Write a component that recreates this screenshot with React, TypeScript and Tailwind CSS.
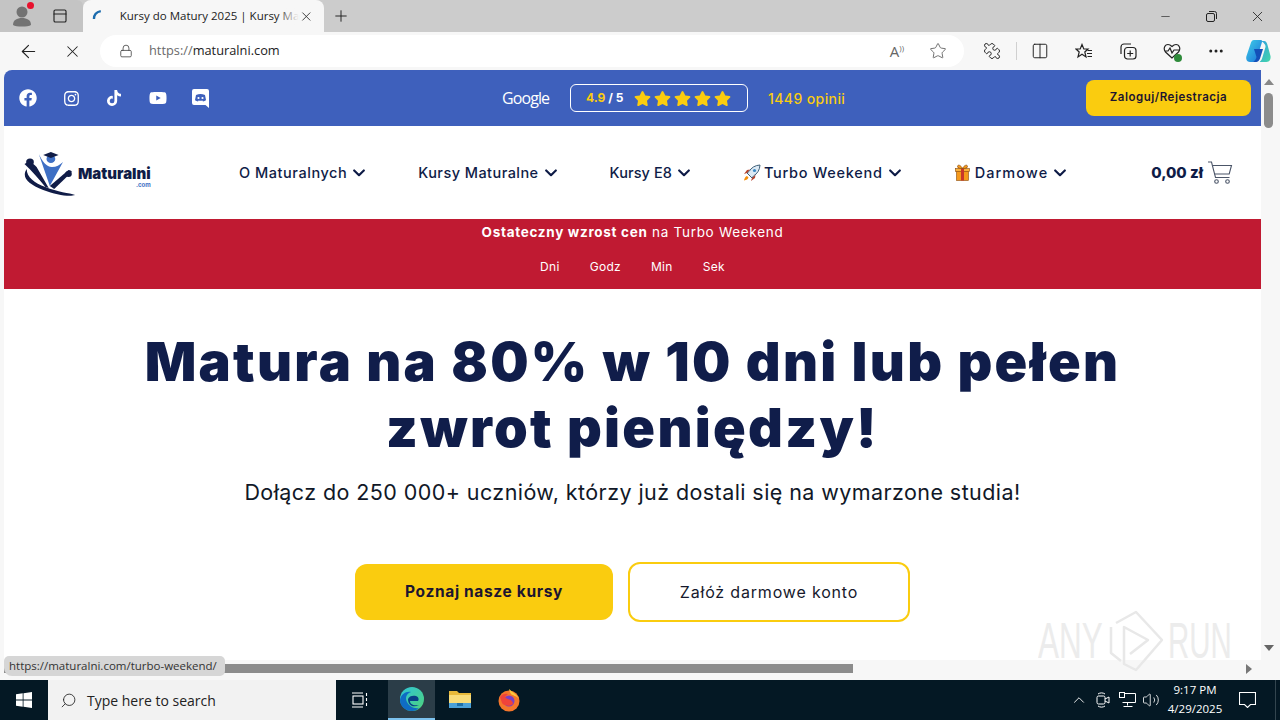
import React from "react";
import { FaFacebook, FaInstagram, FaTiktok, FaYoutube, FaStar } from "react-icons/fa";
import { ArrowLeft, X, Plus, Lock, Star, Minus, Puzzle, Columns2, MoreHorizontal, ChevronUp, Search, Volume2, PanelTop } from "lucide-react";

const MF = "font-['Inter','Liberation_Sans',sans-serif]";

function Chevron() {
  return (
    <svg width="12" height="8" viewBox="0 0 12 8" className="ml-[6px]" fill="none" stroke="#0f1c47" strokeWidth="2.2" strokeLinecap="round" strokeLinejoin="round">
      <path d="M1.2 1.5 6 6.2l4.8-4.7" />
    </svg>
  );
}

function Rocket() {
  return (
    <svg width="18" height="18" viewBox="0 0 18 18" className="mr-[3px]">
      <path d="M17 1c-5 .3-8.500 2.500-11 6.500L4 9l5 5 1.500-2C14.500 9.500 16.700 6 17 1z" fill="#dbe9f4" stroke="#3f5f78" strokeWidth="1" />
      <circle cx="11.500" cy="6.500" r="1.600" fill="#3b88c3" />
      <path d="M4 9 1 10l3-4 3-.5zM9 14l-1 3 4-3 .5-3z" fill="#b5432e" />
      <path d="M4 12c-1.500.5-2.500 1.800-3 4.500 2.700-.5 4-1.500 4.500-3z" fill="#f4900c" />
    </svg>
  );
}

function Gift() {
  return (
    <svg width="15" height="17" viewBox="0 0 15 17" className="ml-[1px] mr-[5px]">
      <rect x="1.500" y="7" width="12" height="9.500" fill="#f59a1b" stroke="#8a4b10" strokeWidth=".6" />
      <rect x=".5" y="4.500" width="14" height="3" fill="#fbb23a" stroke="#8a4b10" strokeWidth=".6" />
      <rect x="6" y="4.500" width="3" height="12" fill="#c9362b" />
      <path d="M7.500 4.500C5.500 .5 2.500 .5 2.500 2.500s3 2 5 2zM7.500 4.500c2-4 5-4 5-2s-3 2-5 2z" fill="#f59a1b" stroke="#8a4b10" strokeWidth=".7" />
    </svg>
  );
}

function NavItem({ label, icon, track }: { label: string; icon?: React.ReactNode; track: string }) {
  return (
    <div className="flex items-center text-[14.500px] font-medium text-[#0f1c47]">
      {icon}
      <span className={track}>{label}</span>
      <Chevron />
    </div>
  );
}

function Logo() {
  return (
    <div className="flex items-end w-[128px] h-[48px]">
      <svg width="58" height="48" viewBox="0 0 58 48" className="shrink-0">
        <g transform="translate(-5 0) scale(1.1 1)">
          <path d="M7 20C2 28 8 35 22 41c12 5 24 7 29 5-5-2-16-3-27-8C14 34 7 28 7 20z" fill="#101c47" />
          <path d="M5 15c4-3 8-1 11 3l11 21-3-1C18 30 12 22 5 15z" fill="#101c47" />
          <circle cx="10" cy="13" r="3.500" fill="#101c47" />
          <path d="M18 5 28 37 40 13c-3 3-6 5-10 5-5 0-9-6-12-13z" fill="#3e6fc4" />
          <path d="M28 37 45 21c2 0 3 1 3 2L32 40z" fill="#101c47" />
          <circle cx="45" cy="25" r="3" fill="#101c47" />
          <circle cx="29" cy="10" r="4" fill="#3e6fc4" />
          <path d="M22 6l7-3 7 3-7 3z" fill="#101c47" />
        </g>
      </svg>
      <div className="flex flex-col items-end ml-[-4px] mb-[9px]">
        <span className="text-[15px] font-black leading-[16px] text-[#101c47]">Maturalni</span>
        <span className="text-[6px] font-bold leading-[6px] text-[#3e6fc4]">.com</span>
      </div>
    </div>
  );
}

function Cart() {
  return (
    <svg width="26" height="24" viewBox="0 0 26 24" fill="none" stroke="#4b5568" strokeWidth="1.100">
      <path d="M1 1h3.500l4 15.500h14" />
      <path d="M5.500 4.500H24.500l-2.300 8.500H7.500" />
      <circle cx="9.500" cy="20.500" r="1.800" />
      <circle cx="20.500" cy="20.500" r="1.800" />
    </svg>
  );
}

function DiscordSquare() {
  return (
    <svg width="17" height="19" viewBox="0 0 17 19">
      <path d="M2 0h13a2 2 0 0 1 2 2v17l-3.500-3H2a2 2 0 0 1-2-2V2a2 2 0 0 1 2-2z" fill="#fff" />
      <path d="M4 6c3-1.500 6-1.500 9 0l1 5c-1 1-2 1.300-3 1.500l-.6-1c-1.300.3-2.500.3-3.800 0l-.6 1c-1-.2-2-.5-3-1.500z" fill="#3e60bc" />
      <circle cx="6.500" cy="9" r="1.100" fill="#fff" />
      <circle cx="10.500" cy="9" r="1.100" fill="#fff" />
    </svg>
  );
}

function EdgeLogo({ size = 26 }: { size?: number }) {
  return (
    <svg width={size} height={size} viewBox="0 0 26 26">
      <defs>
        <linearGradient id="edgeg" x1="0" y1="0" x2="1" y2="1">
          <stop offset="0" stopColor="#2fc5d8" />
          <stop offset="1" stopColor="#4fd27a" />
        </linearGradient>
      </defs>
      <circle cx="13" cy="13" r="12" fill="url(#edgeg)" />
      <path d="M1 14C2 8 7 5 12 6c-5 2-6 6-4 10s7 7 12 6c-2 2-4 3-7 3C6 25 1 20 1 14z" fill="#0f6cc4" />
      <path d="M9 13c1-3 5-4 8-3 3 1 3 4 2 5H11c0 3 3 5 9 4-5 3-11 1-11-6z" fill="#0a3f86" />
    </svg>
  );
}

function Copilot() {
  return (
    <svg width="26" height="26" viewBox="0 0 26 26">
      <defs>
        <linearGradient id="copa" x1="0" y1="0" x2="1" y2="1">
          <stop offset="0" stopColor="#3fd0e8" />
          <stop offset="1" stopColor="#1a6fd8" />
        </linearGradient>
        <linearGradient id="copb" x1="0" y1="0" x2="1" y2="1">
          <stop offset="0" stopColor="#2b9be8" />
          <stop offset="1" stopColor="#45d6a8" />
        </linearGradient>
      </defs>
      <path d="M9 2h7c1 0 1.500 1 1 2l-5 16c-.5 2-2 4-4 4H5C2 24 .5 21 1.500 18l4-12C6 4 7 2 9 2z" fill="url(#copa)" />
      <path d="M12 3h7c2 0 3 2 3.500 4l3 11c.5 3-1 6-4 6h-7c1.500-1 2.500-3 3-5l3-10c.5-2-2-5-5-6z" fill="url(#copb)" />
      <path d="M9 11h9l-2.500 8c-.5 2-2 5-4 5H8c2-1 3-3 3.500-5z" fill="#1450b8" />
    </svg>
  );
}

function Win() {
  return (
    <svg width="16" height="16" viewBox="0 0 16 16" fill="#fff">
      <path d="M0 2.300 6.700 1.300v6.300H0zM7.500 1.200 16 0v7.600H7.500zM0 8.400h6.700v6.300L0 13.700zM7.500 8.400H16V16l-8.500-1.200z" />
    </svg>
  );
}

function Folder() {
  return (
    <svg width="22" height="20" viewBox="0 0 22 20">
      <path d="M0 1h8l2 2h12v15H0z" fill="#e8b93a" />
      <rect x="0" y="5" width="22" height="13" fill="#f9dc7a" />
      <rect x="0" y="13" width="22" height="5" fill="#4ba0d8" />
      <rect x="8" y="13" width="6" height="3" fill="#1f6fa8" />
    </svg>
  );
}

export default function App() {
  return (
    <div className="relative w-[1280px] h-[720px] overflow-hidden flex flex-col bg-[#f7f7f7] font-['Open_Sans','Liberation_Sans',sans-serif]">
      {/* Tab strip */}
      <div className="h-[32px] bg-[#cccccc] flex items-end shrink-0">
        <div className="w-[83px] h-[32px] flex items-center bg-[#c4c4c4] rounded-tr-[6px]">
          <div className="relative w-[44px] flex justify-center">
            <svg width="20" height="22" viewBox="0 0 20 22" fill="#737373">
              <circle cx="10" cy="7" r="5.500" />
              <path d="M1 20c0-5 4-7 9-7s9 2 9 7c-3 2-15 2-18 0z" />
            </svg>
            <div className="absolute top-[-3px] left-[27px] w-[7px] h-[7px] rounded-full bg-[#e8112d]" />
          </div>
          <PanelTop size={16} strokeWidth={1.700} className="text-[#222] ml-[8px]" />
        </div>
        <div className="w-[241px] h-[32px] bg-[#f7f7f7] rounded-t-[8px] flex items-center pl-[9px] pr-[10px]">
          <svg width="12" height="14" viewBox="0 0 12 14" fill="none" stroke="#1c6cae" strokeWidth="2.400">
            <path d="M2 10C2 6 4 3 9 2" />
          </svg>
          <div className="relative ml-[16px] w-[180px]">
            <span className="block whitespace-nowrap text-[11.500px] text-[#222]">Kursy do Matury 2025 | Kursy Ma</span>
            <div className="absolute right-0 top-0 bottom-0 w-[22px] bg-gradient-to-r from-transparent to-[#f7f7f7]" />
          </div>
          <X size={15} strokeWidth={1.500} className="text-[#333] ml-auto" />
        </div>
        <div className="w-[34px] h-[32px] flex items-center justify-center">
          <Plus size={18} strokeWidth={1.300} className="text-[#222]" />
        </div>
        <div className="ml-auto flex h-[32px] items-center text-[#222]">
          <div className="w-[46px] flex justify-center"><Minus size={13} strokeWidth={1.200} /></div>
          <div className="w-[46px] flex justify-center">
            <svg width="11" height="11" viewBox="0 0 11 11" fill="none" stroke="#222"><rect x=".5" y="2.500" width="8" height="8" rx="1.500" /><path d="M3 .5h5.500a2 2 0 0 1 2 2V8" /></svg>
          </div>
          <div className="w-[46px] flex justify-center"><X size={17} strokeWidth={1.200} /></div>
        </div>
      </div>

      {/* Toolbar */}
      <div className="h-[38px] shrink-0 flex items-center bg-[#f7f7f7]">
        <div className="w-[56px] flex justify-center"><ArrowLeft size={21} strokeWidth={1.300} className="text-[#222]" /></div>
        <div className="w-[32px] flex justify-center"><X size={19} strokeWidth={1.300} className="text-[#222]" /></div>
        <div className="ml-[12px] w-[864px] h-[32px] rounded-full bg-white flex items-center pl-[19px] pr-[17px]">
          <Lock size={14} strokeWidth={1.400} className="text-[#444]" />
          <span className="ml-[16px] text-[12.800px] text-[#222]"><span className="text-[#6a6a6a]">https://</span>maturalni.com</span>
          <span className="ml-auto mr-[3px] text-[15px] text-[#666]">A<span className="text-[8px] align-super">))</span></span>
          <Star size={18} strokeWidth={1.100} className="ml-[22px] text-[#555]" />
        </div>
        <div className="ml-[18px] w-[20px] flex justify-center"><Puzzle size={18} strokeWidth={1.300} className="text-[#222] -scale-x-100" /></div>
        <div className="ml-[14px] w-px h-[18px] bg-[#d0d0d0]" />
        <div className="ml-[13px] w-[20px] flex justify-center"><Columns2 size={18} strokeWidth={1.300} className="text-[#222]" /></div>
        <div className="ml-[24px] w-[20px] flex justify-center">
          <svg width="18" height="17" viewBox="0 0 18 17" fill="none" stroke="#222" strokeWidth="1.200">
            <path d="M7 1.500 8.800 6H13l-3.200 3 1.200 5-4-2.700L3 14l1.200-5L1 6h4.200z" />
            <path d="M12.500 7.500H17M12 10.500h5M12.500 13.500H17" />
          </svg>
        </div>
        <div className="ml-[24px] w-[20px] flex justify-center">
          <svg width="18" height="18" viewBox="0 0 18 18" fill="none" stroke="#222" strokeWidth="1.200"><rect x="5.500" y="5.500" width="11.500" height="11.500" rx="3" /><path d="M2 12V5a3 3 0 0 1 3-3h7M11.200 8.500v6M8.200 11.500h6" /></svg>
        </div>
        <div className="ml-[24px] w-[20px] relative flex justify-center">
          <svg width="18" height="17" viewBox="0 0 18 17" fill="none" stroke="#222" strokeWidth="1.200"><path d="M9 15 2.500 9C0 6 1.500 1.500 5 1.500c2 0 3 1 4 2 1-1 2-2 4-2 3.500 0 5 4.500 2.500 7.500zM2 8h3l2-3 2 5 2-3h5" /></svg>
          <div className="absolute right-[0px] bottom-[-2px] w-[8px] h-[8px] rounded-full bg-[#2e8b3a]" />
        </div>
        <div className="ml-[24px] w-[20px] flex justify-center"><MoreHorizontal size={18} strokeWidth={2} className="text-[#222]" /></div>
        <div className="ml-[19px]"><Copilot /></div>
      </div>

      {/* Browser content */}
      <div className="flex-1 min-h-0 flex pl-[4px] bg-[#f7f7f7]">
        <div className="flex-1 min-w-0 flex flex-col">
          <div className={`flex-1 min-h-0 flex flex-col bg-white rounded-tl-[8px] overflow-hidden ${MF}`}>
            {/* Blue bar */}
            <div className="h-[56px] shrink-0 bg-[#3e60bc] flex items-center pl-[15px] pr-[10px]">
              <div className="flex items-center w-[213px] text-white">
                <div className="w-[44px]"><FaFacebook size={18} /></div>
                <div className="w-[43px]"><FaInstagram size={17} /></div>
                <div className="w-[43px]"><FaTiktok size={16} /></div>
                <div className="w-[43px]"><FaYoutube size={18} /></div>
                <div className="w-[40px]"><DiscordSquare /></div>
              </div>
              <span className="ml-[270px] w-[48px] text-[16px] font-medium text-white font-['Open_Sans',sans-serif] tracking-[-0.9px]">Google</span>
              <div className="ml-[20px] w-[178px] h-[28px] rounded-[6px] border border-white flex items-center pl-[15px]">
                <span className="text-[12px] font-bold text-[#facc0f]">4.9</span>
                <span className="text-[12px] font-bold text-white ml-[3px]">/ 5</span>
                <div className="ml-[10px] flex gap-[3px] text-[#facc0f]">
                  <FaStar size={17} /><FaStar size={17} /><FaStar size={17} /><FaStar size={17} /><FaStar size={17} />
                </div>
              </div>
              <span className="ml-[20px] text-[14px] font-medium text-[#facc0f] tracking-[0.4px]">1449 opinii</span>
              <div className="ml-auto w-[165px] h-[36px] rounded-[8px] bg-[#facc0f] flex items-center justify-center text-[11.500px] font-semibold text-[#1c1530] tracking-[0.52px]">Zaloguj/Rejestracja</div>
            </div>
            {/* Nav */}
            <div className="h-[93px] shrink-0 flex items-center pl-[20px] pr-[28px] bg-white">
              <Logo />
              <div className="ml-[87px] flex items-center gap-[53px]">
                <NavItem label="O Maturalnych" track="tracking-[0.54px]" />
                <NavItem label="Kursy Maturalne" track="tracking-[0.45px]" />
                <NavItem label="Kursy E8" track="tracking-[0.08px]" />
                <NavItem label="Turbo Weekend" track="tracking-[0.72px]" icon={<Rocket />} />
                <NavItem label="Darmowe" track="tracking-[1.05px]" icon={<Gift />} />
              </div>
              <div className="ml-auto flex items-center">
                <span className="text-[15px] font-extrabold text-[#0f1c47] mr-[4px] mt-[2px]">0,00 zł</span>
                <Cart />
              </div>
            </div>
            {/* Red banner */}
            <div className="h-[70px] shrink-0 bg-[#c01a32] flex flex-col items-center text-white">
              <div className="mt-[4px] text-[13.500px] leading-[18px] tracking-[0.7px]"><span className="font-bold">Ostateczny wzrost cen</span> na Turbo Weekend</div>
              <div className="mt-[18px] flex gap-[30px] text-[12px] leading-[16px] tracking-[0.3px]">
                <span>Dni</span><span>Godz</span><span>Min</span><span>Sek</span>
              </div>
            </div>
            {/* Hero */}
            <div className="flex-1 min-h-0 flex flex-col items-center pt-[40px]">
              <h1 className="w-[1040px] text-center text-[54px] leading-[66px] font-black text-[#101d4a] tracking-[2.3px]">Matura na 80% w 10 dni lub pełen zwrot pieniędzy!</h1>
              <p className="mt-[16px] text-[21.500px] leading-[30px] text-[#111827] tracking-[0.42px]">Dołącz do 250 000+ uczniów, którzy już dostali się na wymarzone studia!</p>
              <div className="mt-[55px] flex items-center gap-[15px]">
                <div className="w-[258px] h-[56px] rounded-[12px] bg-[#facc0f] flex items-center justify-center text-[15.500px] font-bold text-[#1c1530] tracking-[0.65px]">Poznaj nasze kursy</div>
                <div className="w-[282px] h-[60px] rounded-[12px] border-2 border-[#facc0f] bg-white flex items-center justify-center text-[16px] text-[#16192c] tracking-[0.82px]">Załóż darmowe konto</div>
              </div>
            </div>
          </div>
          {/* H scrollbar */}
          <div className="h-[20px] shrink-0 bg-[#f7f7f7] pt-[4px] flex">
            <div className="h-[9px] w-[849px] bg-[#8c8c8c]" />
            <svg width="6" height="10" viewBox="0 0 6 10" className="ml-auto mr-[9px]" fill="#777"><path d="M0 0l6 5-6 5z" /></svg>
          </div>
        </div>
        {/* V scrollbar */}
        <div className="w-[19px] shrink-0 flex flex-col items-center pt-[9px] pb-[29px] pr-[4px] bg-[#f7f7f7]">
          <svg width="10" height="6" viewBox="0 0 10 6" fill="#888"><path d="M5 0l5 6H0z" /></svg>
          <div className="mt-[8px] w-[9px] h-[35px] rounded-full bg-[#8c8c8c]" />
          <svg width="10" height="6" viewBox="0 0 10 6" className="mt-auto" fill="#666"><path d="M5 6 0 0h10z" /></svg>
        </div>
      </div>

      {/* Status bubble */}
      <div className="absolute left-[4px] top-[656px] w-[221px] h-[20px] rounded-[5px] rounded-bl-[8px] bg-[#d6d6d6] pl-[5px] text-[11.500px] leading-[19px] text-[#333]">https://maturalni.com/turbo-weekend/</div>

      {/* Watermark */}
      <div className="absolute left-[1038px] top-[608px] w-[196px] h-[66px] flex items-center text-[50px] leading-[66px] text-[#ececec] font-['Liberation_Sans',sans-serif]">
        <span className="w-[70px] origin-left scale-x-[0.63] whitespace-nowrap">ANY</span>
        <svg width="58" height="64" viewBox="0 0 58 64" fill="none" stroke="#e8e8e8" strokeWidth="2.500" strokeLinejoin="round">
          <path d="M8 14 28 3l26 28-26 30-12-6V18l24 13-18 14" />
          <path d="M3 18v26l10 8" />
        </svg>
        <span className="ml-[2px] w-[64px] origin-left scale-x-[0.59] whitespace-nowrap">RUN</span>
      </div>

      {/* Taskbar */}
      <div className="h-[40px] shrink-0 bg-[#041824] flex items-center text-white">
        <div className="w-[48px] flex justify-center"><Win /></div>
        <div className="w-[288px] h-[40px] bg-[#f2f2f2] flex items-center pl-[12px] text-[#222]">
          <Search size={17} strokeWidth={1.200} className="-scale-x-100" />
          <span className="ml-[10px] text-[14px]">Type here to search</span>
        </div>
        <div className="w-[52px] pr-[4px] flex justify-center">
          <svg width="16" height="16" viewBox="0 0 16 16" fill="none" stroke="#fff" strokeWidth="1.100"><path d="M0 1h11M0 15h11" /><rect x="1" y="4" width="10" height="8" /><path d="M14.500 1v3M14.500 6v3M14.500 11v3" /></svg>
        </div>
        <div className="w-[47px] h-[40px] bg-[#2b3d48] border-b-2 border-[#7cc2ee] flex items-center justify-center"><EdgeLogo /></div>
        <div className="w-[50px] flex justify-center"><Folder /></div>
        <div className="w-[48px] flex justify-center">
          <svg width="24" height="24" viewBox="0 0 24 24">
            <circle cx="12" cy="13" r="10.500" fill="#f5762b" />
            <path d="M12 1c3 3 8 5 10 10-2-3-5-3-6-4-1 0-3-1-4-6z" fill="#fcc63a" />
            <circle cx="12" cy="13" r="5.500" fill="#7a3fc4" />
            <path d="M3 9c2-3 5-4 8-3l-3 3c2 3 8 2 8 7-3 3-9 2-11-1z" fill="#f0433a" />
          </svg>
        </div>
        <div className="ml-auto flex items-center h-[40px]">
          <div className="w-[24px] flex justify-center"><ChevronUp size={18} strokeWidth={1.200} /></div>
          <div className="w-[24px] flex justify-center">
            <svg width="14" height="16" viewBox="0 0 14 16" fill="none" stroke="#fff" strokeWidth="1"><rect x="1" y="4" width="8" height="8" rx="1.500" /><path d="M9 7l4-2v6l-4-2M2 2c2-1.500 5-1.500 7 0M2 14c2 1.500 5 1.500 7 0" /></svg>
          </div>
          <div className="w-[24px] flex justify-center">
            <svg width="17" height="16" viewBox="0 0 17 16" fill="none" stroke="#fff" strokeWidth="1"><path d="M3.500 1.500h13v9h-13M8.500 10.500v3M4.500 14.500h9" /><rect x=".5" y=".5" width="5" height="5" fill="#041824" /></svg>
          </div>
          <div className="w-[24px] flex justify-center"><Volume2 size={18} strokeWidth={1.100} /></div>
          <div className="flex flex-col items-center w-[64px] mb-[2px] text-[11.500px] leading-[19px]">
            <span>9:17 PM</span>
            <span>4/29/2025</span>
          </div>
          <div className="w-[40px] flex justify-center">
            <svg width="17" height="16" viewBox="0 0 17 16" fill="none" stroke="#fff" strokeWidth="1.100"><path d="M.5.5h16v12h-5l-3 3-3-3h-5z" /></svg>
          </div>
          <div className="w-[13px] h-[40px] flex justify-end">
            <div className="w-[5px] h-[40px] border-l border-[#33454f]" />
          </div>
        </div>
      </div>
    </div>
  );
}
